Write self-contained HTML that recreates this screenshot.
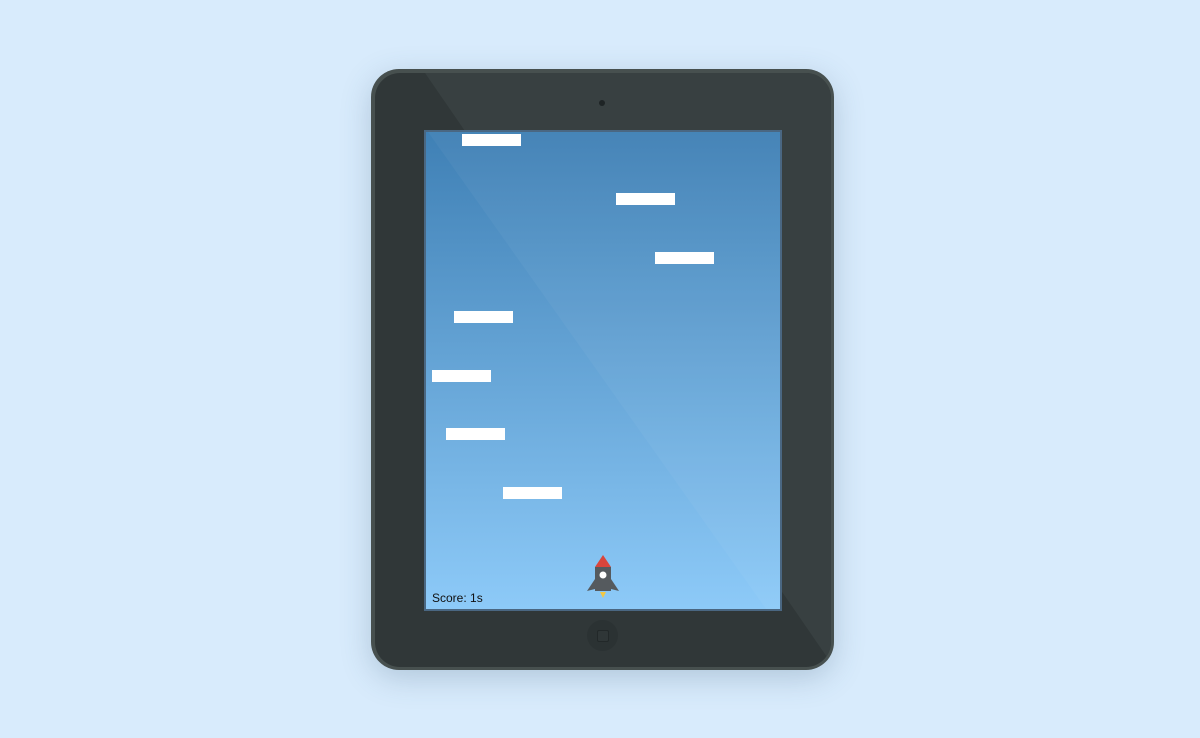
<!DOCTYPE html>
<html><head><style>
body{margin:0;width:1200px;height:738px;background:#d8ebfc;position:relative;overflow:hidden;font-family:"Liberation Sans",sans-serif}
.tab{position:absolute;left:371px;top:69px;width:463px;height:601px;border-radius:28px;background:#47504f;box-shadow:0 8px 30px rgba(60,90,120,.25);overflow:hidden}
.in{position:absolute;left:4px;top:4px;right:3px;bottom:3px;border-radius:25px;background:#303738;overflow:hidden}
.scr{position:absolute;left:424px;top:130px;width:354px;height:477px;border:2px solid #4a6782;background:linear-gradient(#3f80b5,#8dcaf8);overflow:hidden}
.p{position:absolute;width:59px;height:12px;background:#fff}
</style></head><body>
<div class="tab"><div class="in">
<svg width="456" height="594" style="position:absolute;left:0;top:0"><polygon points="50,0 456,0 456,590" fill="#384041"/></svg>
</div></div>
<div style="position:absolute;left:599px;top:100px;width:6px;height:6px;border-radius:50%;background:#1e2425"></div>
<div style="position:absolute;left:587px;top:620px;width:31px;height:31px;border-radius:50%;background:#2b3233"></div>
<div style="position:absolute;left:597px;top:630px;width:10px;height:10px;border:1px solid #222829;border-radius:2px;background:#2f3637"></div>
<div class="scr">
<svg width="354" height="477" style="position:absolute;left:0;top:0"><polygon points="2,0 354,0 354,477 340,477" fill="rgba(255,255,255,0.04)"/></svg>
</div>
<div class="p" style="left:462px;top:134px"></div>
<div class="p" style="left:616px;top:193px"></div>
<div class="p" style="left:655px;top:252px"></div>
<div class="p" style="left:454px;top:311px"></div>
<div class="p" style="left:432px;top:370px"></div>
<div class="p" style="left:446px;top:428px"></div>
<div class="p" style="left:503px;top:487px"></div>
<svg width="40" height="50" style="position:absolute;left:583px;top:553px">
<polygon points="20,2 28,14 12,14" fill="#d9453c"/>
<rect x="12" y="14" width="16" height="24" fill="#555a5e"/>
<polygon points="12,26 4,38 12,36" fill="#555a5e"/>
<polygon points="28,26 36,38 28,36" fill="#555a5e"/>
<rect x="12" y="36" width="16" height="2" fill="#555a5e"/>
<circle cx="20" cy="22" r="3.5" fill="#fff"/>
<polygon points="17,39 23,39 20,45" fill="#f2c744"/>
</svg>
<div style="position:absolute;left:432px;top:591px;font-size:12px;color:#111">Score: 1s</div>
</body></html>
